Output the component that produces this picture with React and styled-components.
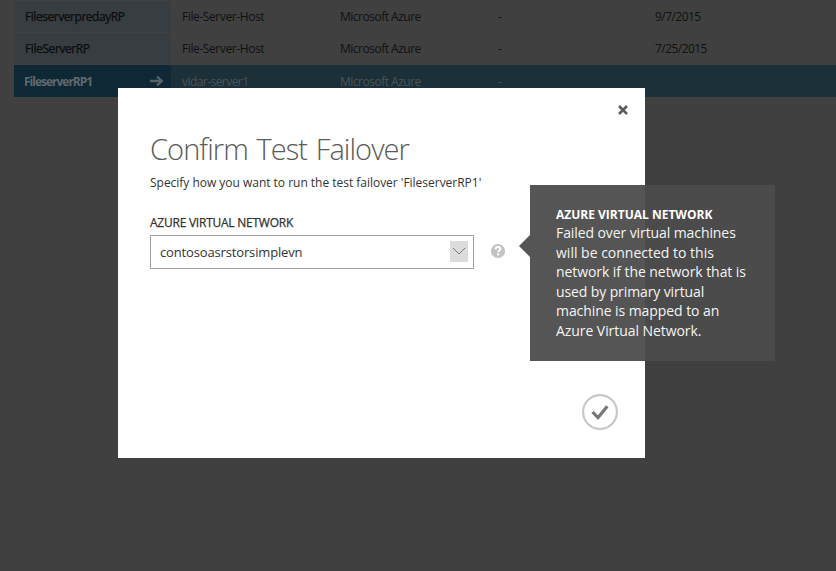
import React from "react";
import styled, { createGlobalStyle } from "styled-components";

const Global = createGlobalStyle`
  * { box-sizing: border-box; }
  html, body { margin: 0; background: #404040; }
  body { font-family: "Open Sans", "Noto Sans", sans-serif; overflow: hidden; }
`;

const Page = styled.div`
  position: relative;
  width: 836px;
  height: 571px;
  background: #404040;
  overflow: hidden;
`;

const Table = styled.div`
  display: grid;
  gap: 1px;
  padding: 1px 0 0 14px;
`;

const Row = styled.div`
  display: grid;
  grid-template-columns: 157px 158px 158px 157px 1fr;
  height: ${(p) => (p.$selected ? 32 : 31)}px;
  background: ${(p) => (p.$selected ? "#1b3038" : "transparent")};
  color: ${(p) => (p.$selected ? "#4b5457" : "#101010")};
`;

const Cell = styled.div`
  display: flex;
  align-items: center;
  padding: ${(p) => (p.$selected ? 2 : 0)}px 0 0 11px;
  font-size: 12px;
  line-height: 16px;
  letter-spacing: ${(p) => p.$track || 0}px;
  white-space: nowrap;
`;

const NameCell = styled(Cell)`
  justify-content: space-between;
  padding: ${(p) => (p.$selected ? 2 : 0)}px 7px 0 ${(p) => (p.$selected ? 10 : 11)}px;
  background: ${(p) => (p.$selected ? "#0f2835" : "#373d40")};
  color: ${(p) => (p.$selected ? "#60696d" : "#0b0c0d")};
  font-weight: ${(p) => (p.$selected ? 700 : 400)};
  -webkit-text-stroke: ${(p) => (p.$selected ? 0 : 0.25)}px currentColor;
`;

const Dialog = styled.section`
  position: absolute;
  left: 118px;
  top: 88px;
  width: 527px;
  height: 370px;
  padding: 16px 27px 28px 32px;
  display: flex;
  flex-direction: column;
  background: #fff;
  color: #333;
`;

const IconButton = styled.button`
  display: flex;
  align-self: flex-end;
  padding: 0;
  border: 0;
  background: none;
`;

const CloseButton = styled(IconButton)`
  margin: 1px -10px 0 0;
`;

const Title = styled.h1`
  margin: 14px 0 0;
  font-size: 29px;
  line-height: 40px;
  font-weight: 300;
  letter-spacing: -0.92px;
  word-spacing: 2px;
  color: #5a5a5a;
  white-space: nowrap;
`;

const Lead = styled.p`
  margin: 5px 0 0;
  font-size: 12px;
  line-height: 18px;
  letter-spacing: -0.02px;
  white-space: nowrap;
`;

const Label = styled.label`
  margin-top: 22px;
  font-size: 12px;
  line-height: 18px;
  letter-spacing: -0.24px;
  color: #333;
  -webkit-text-stroke: 0.25px currentColor;
`;

const Field = styled.div`
  display: flex;
  align-items: center;
  gap: 16px;
  margin-top: 3px;
`;

const Select = styled.div`
  display: flex;
  align-items: center;
  justify-content: space-between;
  width: 324px;
  height: 34px;
  padding: 0 5px 0 9px;
  border: 1px solid #a0a0a0;
  font-size: 13px;
  letter-spacing: -0.15px;
`;

const SelectArrow = styled.span`
  display: flex;
  align-items: center;
  justify-content: center;
  width: 18px;
  height: 21px;
  margin-top: -2px;
  background: #dcdcdc;
`;

const HelpIcon = styled.svg`
  margin-bottom: 2px;
`;

const Confirm = styled(IconButton)`
  margin-top: auto;
`;

const Tooltip = styled.aside`
  position: absolute;
  left: 530px;
  top: 185px;
  width: 245px;
  height: 176px;
  padding: 21px 20px 0 26px;
  background: linear-gradient(to right, #555 115px, #4b4b4b 115px);
  color: #f4f4f4;
  font-size: 14px;
  line-height: 19.6px;
  &::before {
    content: "";
    position: absolute;
    left: -11px;
    top: 50px;
    border: 11px solid transparent;
    border-left: 0;
    border-right-color: #555;
  }
`;

const TipTitle = styled.div`
  font-size: 12px;
  font-weight: 700;
  letter-spacing: 0;
  line-height: 17px;
  color: #fff;
`;

const TipLine = styled.div`
  letter-spacing: ${(p) => p.$track}px;
  white-space: nowrap;
`;

const rows = [
  { name: "FileserverpredayRP", source: "File-Server-Host", date: "9/7/2015", tracks: [-0.45, -0.4] },
  { name: "FileServerRP", source: "File-Server-Host", date: "7/25/2015", tracks: [-0.4, -0.4] },
  { name: "FileserverRP1", source: "vidar-server1", date: "", selected: true, tracks: [-1, -0.55] },
];

const tip = [
  ["Failed over virtual machines", -0.09],
  ["will be connected to this", 0],
  ["network if the network that is", -0.07],
  ["used by primary virtual", -0.11],
  ["machine is mapped to an", -0.07],
  ["Azure Virtual Network.", -0.06],
];

export default function App() {
  return (
    <Page>
      <Global />
      <Table>
        {rows.map((r) => (
          <Row key={r.name} $selected={r.selected}>
            <NameCell $selected={r.selected} $track={r.tracks[0]}>
              {r.name}
              {r.selected && (
                <svg width="14" height="12" viewBox="0 0 14 12" fill="none" stroke="#56636a" strokeWidth="2.300">
                  <path d="M0 5h12M7 0.500 11.800 5 7 9.500" />
                </svg>
              )}
            </NameCell>
            <Cell $selected={r.selected} $track={r.tracks[1]}>{r.source}</Cell>
            <Cell $selected={r.selected} $track={-0.5}>Microsoft Azure</Cell>
            <Cell $selected={r.selected}>-</Cell>
            <Cell $track={-0.55}>{r.date}</Cell>
          </Row>
        ))}
      </Table>

      <Dialog role="dialog">
        <CloseButton aria-label="Close">
          <svg width="10" height="10" viewBox="0 0 10 10" stroke="#5c5c5c" strokeWidth="2.6">
            <path d="M1 1l8 8M9 1 1 9" />
          </svg>
        </CloseButton>
        <Title>Confirm Test Failover</Title>
        <Lead>Specify how you want to run the test failover 'FileserverRP1'</Lead>
        <Label>AZURE VIRTUAL NETWORK</Label>
        <Field>
          <Select>
            contosoasrstorsimplevn
            <SelectArrow>
              <svg width="14" height="8" viewBox="0 0 14 8" fill="none" stroke="#777">
                <path d="M1 1l6 6 6-6" />
              </svg>
            </SelectArrow>
          </Select>
          <HelpIcon width="16" height="16" viewBox="0 0 16 16" fill="none">
            <circle cx="8" cy="8" r="7.100" fill="#c3c3c3" />
            <path d="M5.600 6.200c0-1.500.9-2.200 2.400-2.200s2.400.8 2.400 2c0 1.600-2.200 1.500-2.200 3.200" stroke="#fff" strokeWidth="1.800" />
            <path d="M7.200 10.400h2v1.900h-2z" fill="#fff" />
          </HelpIcon>
        </Field>
        <Confirm aria-label="Confirm">
          <svg width="36" height="36" viewBox="0 0 36 36" fill="none">
            <circle cx="18" cy="18" r="16.900" stroke="#c8c8c8" strokeWidth="2.200" />
            <path d="M10.500 18l5.500 5.700 9.300-11.500" stroke="#767676" strokeWidth="3.200" />
          </svg>
        </Confirm>
      </Dialog>

      <Tooltip role="tooltip">
        <TipTitle>AZURE VIRTUAL NETWORK</TipTitle>
        {tip.map(([text, track]) => (
          <TipLine key={text} $track={track}>{text}</TipLine>
        ))}
      </Tooltip>
    </Page>
  );
}
